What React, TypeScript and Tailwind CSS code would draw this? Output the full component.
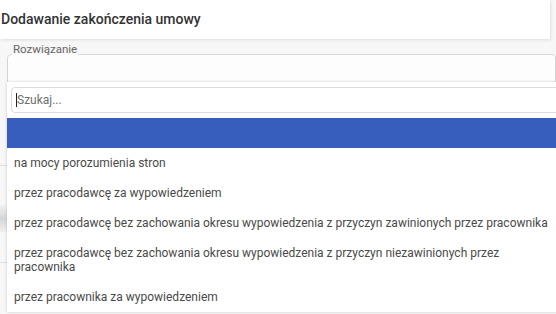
import React from 'react';

const options = [
  'na mocy porozumienia stron',
  'przez pracodawcę za wypowiedzeniem',
  'przez pracodawcę bez zachowania okresu wypowiedzenia z przyczyn zawinionych przez pracownika',
  'przez pracodawcę bez zachowania okresu wypowiedzenia z przyczyn niezawinionych przez pracownika',
  'przez pracownika za wypowiedzeniem',
];

function Dropdown() {
  return (
    <div className="absolute left-[7px] top-[82px] w-[560px] bottom-[2px] bg-white shadow-[0_0_3px_rgba(0,0,0,0.18)]">
      <div className="mx-[4px] mt-[5px] h-[26px] border border-[#dcdcdc] rounded-[4px] flex items-center pl-[4px]">
        <span className="w-px h-[14px] bg-[#222]" />
        <span className="text-[12px] text-[#6f6f6f]">Szukaj...</span>
      </div>
      <div className="mt-[5px] h-[30px] bg-[#385ebd]" />
      {options.map((o) => (
        <div key={o} className="pl-[7px] pr-[18px] py-[8px] text-[12px] leading-[14px] text-[#4a4a4a]">
          {o}
        </div>
      ))}
    </div>
  );
}

export default function App() {
  return (
    <div
      className="relative w-[556px] h-[314px] overflow-hidden bg-[#f7f7f7]"
      style={{ fontFamily: 'Roboto, "Noto Sans", sans-serif' }}
    >
      <header className="h-[39px] w-[550px] bg-white shadow-[1px_1px_3px_rgba(0,0,0,0.1)] flex items-center pl-[1px] text-[14px] font-medium text-[#333]">
        Dodawanie zakończenia umowy
      </header>
      <div className="pl-[7px] pt-[4px]">
        <fieldset className="border border-[#d6d6d6] rounded-[4px] h-[60px] bg-[#fdfdfd] px-[4px]">
          <legend className="px-[1px] text-[11.5px] leading-[12px] pb-[10px] text-[#666]">Rozwiązanie</legend>
        </fieldset>
      </div>
      <div className="mt-[62px] h-px bg-[#dedede]" />
      <div className="mt-[39px] h-[27px] bg-[linear-gradient(to_bottom,#f2f2f2,#d6d6d6_50%,#f0f0f0)]" />
      <div className="mt-[30px] h-px bg-[#dedede]" />
      <Dropdown />
    </div>
  );
}
